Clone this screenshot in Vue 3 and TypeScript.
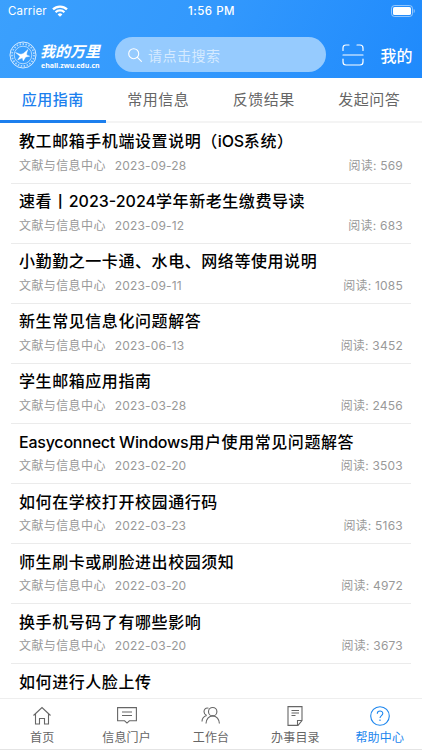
<script setup lang="ts">
interface Article { title: string; date?: string; reads?: number }
interface Segment { text: string; kind: 'cjk' | 'latin' | 'digits' }
const tabs: string[] = ['应用指南', '常用信息', '反馈结果', '发起问答']
const articles: Article[] = [
  { title: '教工邮箱手机端设置说明（iOS系统）', date: '2023-09-28', reads: 569 },
  { title: '速看丨2023-2024学年新老生缴费导读', date: '2023-09-12', reads: 683 },
  { title: '小勤勤之一卡通、水电、网络等使用说明', date: '2023-09-11', reads: 1085 },
  { title: '新生常见信息化问题解答', date: '2023-06-13', reads: 3452 },
  { title: '学生邮箱应用指南', date: '2023-03-28', reads: 2456 },
  { title: 'Easyconnect Windows用户使用常见问题解答', date: '2023-02-20', reads: 3503 },
  { title: '如何在学校打开校园通行码', date: '2022-03-23', reads: 5163 },
  { title: '师生刷卡或刷脸进出校园须知', date: '2022-03-20', reads: 4972 },
  { title: '换手机号码了有哪些影响', date: '2022-03-20', reads: 3673 },
  { title: '如何进行人脸上传' },
]
// Latin words and digits are tracked tighter than Chinese characters.
const segments = (title: string): Segment[] =>
  (title.match(/[A-Za-z ]+|[0-9-]+|[^A-Za-z0-9 -]+/g) ?? []).map((text) => ({
    text,
    kind: /^[A-Za-z ]/.test(text) ? 'latin' : /^[0-9-]/.test(text) ? 'digits' : 'cjk',
  }))
</script>

<template>
  <div class="screen">
    <header class="top">
      <div class="status">
        <div class="carrier">
          <span>Carrier</span>
          <svg width="16" height="12" viewBox="0 0 16 12" fill="none" stroke="#fff" stroke-width="2.3">
            <path d="M1 4.400a10 10 0 0 1 14 0M3.600 7.200a6.300 6.300 0 0 1 8.800 0" />
            <path d="M8 11.800 5.600 9.400a3.500 3.500 0 0 1 4.800 0z" fill="#fff" stroke="none" />
          </svg>
        </div>
        <span class="time">1:56 PM</span>
        <svg class="battery" width="24" height="12" viewBox="0 0 24 12">
          <rect x=".5" y=".5" width="21" height="11" rx="3" fill="none" stroke="#fff" stroke-opacity=".5" />
          <rect x="2" y="2" width="18" height="8" rx="1.600" fill="#fff" />
          <path d="M22.700 4v4c1.500-.7 1.500-3.300 0-4" fill="#fff" fill-opacity=".5" />
        </svg>
      </div>
      <div class="bar">
        <svg class="seal" width="28" height="28" viewBox="0 0 28 28" fill="none" stroke="#fff">
          <circle cx="14" cy="14" r="13" stroke-width=".8" />
          <circle cx="14" cy="14" r="11" stroke-width="1.800" stroke-dasharray="1.500 1.500" opacity=".6" />
          <circle cx="14" cy="14" r="8.800" stroke-width=".6" />
          <path d="M6.500 11.500c2.500.5 4 2.300 6.500 1.500 2-.4 3.500-2.500 6-4.500-.8 2-1.500 3.500-1.300 5.500l3 1.200-4 .8-2.500 4-.8-3.200-4.700 2.200 2.300-3.800z" fill="#fff" stroke-width=".4" />
        </svg>
        <div class="brand">
          <span class="brand-name">我的万里</span>
          <span class="brand-url">ehall.zwu.edu.cn</span>
        </div>
        <div class="search">
          <svg width="14" height="14" viewBox="0 0 14 14" fill="none" stroke="#fff" stroke-width="1.100" stroke-linecap="round">
            <circle cx="5.700" cy="5.700" r="5" /><path d="m9.400 9.400 4 4" />
          </svg>
          <span>请点击搜索</span>
        </div>
        <svg class="scan" width="22" height="22" viewBox="0 0 22 22" fill="none" stroke="#fff" stroke-width="1.200" stroke-linecap="round">
          <path d="M1 6.500V4q0-3 3-3h3M15 1h3q3 0 3 3v2.500M1 15v3q0 3 3 3h14q3 0 3-3v-3M1 11h20" />
        </svg>
        <span class="mine">我的</span>
      </div>
    </header>
    <nav class="tabs">
      <div v-for="(t, i) in tabs" :key="t" class="tab" :class="{ active: i === 0 }">{{ t }}</div>
    </nav>
    <main class="list">
      <article v-for="a in articles" :key="a.title" class="item">
        <h2 class="title"><span v-for="(s, i) in segments(a.title)" :key="i" :class="s.kind">{{ s.text }}</span></h2>
        <div v-if="a.date" class="meta">
          <span>文献与信息中心</span><span class="date">{{ a.date }}</span><span class="reads">阅读: {{ a.reads }}</span>
        </div>
      </article>
    </main>
    <footer class="dock">
      <div class="dock-item">
        <svg width="20" height="20" viewBox="0 0 20 20"><path d="M1.500 9.500 10 1.500l8.500 8M3.500 8v10h4v-5.500h5V18h4V8" /></svg>
        <span>首页</span>
      </div>
      <div class="dock-item">
        <svg width="20" height="20" viewBox="0 0 20 20"><path d="M.6 1.600h18.800v13.200h-7L10 17.100l-2.400-2.300h-7zM5 6h10M5 9.500h10" /></svg>
        <span>信息门户</span>
      </div>
      <div class="dock-item">
        <svg width="20" height="20" viewBox="0 0 20 20"><circle cx="11.700" cy="5.700" r="4.200" /><path d="M5 17.500c.2-4 2.700-7.600 6.700-7.600s6.500 3.600 6.700 7.600M7.500 2.200C4.500 1.500 3 3.500 3 5.700s1 3 2.700 3.800M1 15.500c0-3 1.300-5 4.700-6" /></svg>
        <span>工作台</span>
      </div>
      <div class="dock-item">
        <svg width="20" height="20" viewBox="0 0 20 20"><path d="M3 .6h14v13.900l-4 4.900H3zM12.500 19v-4.500H17M6.500 4.500h7.500M6.500 7h7.500M6.500 9.500h4" /></svg>
        <span>办事目录</span>
      </div>
      <div class="dock-item active">
        <svg width="20" height="20" viewBox="0 0 20 20"><circle cx="10" cy="10" r="9.300" /><path d="M7.300 7.800c0-3.700 5.500-3.500 5.500-.3 0 2-2.800 2.200-2.800 4.500M10 13.600v1.500" /></svg>
        <span>帮助中心</span>
      </div>
    </footer>
  </div>
</template>

<style>
body { margin: 0; overflow: hidden; }
</style>

<style scoped>
.screen { width: 422px; height: 750px; display: flex; flex-direction: column; overflow: hidden; background: #fff; font-family: Inter, "Noto Sans CJK SC", sans-serif; color: #000; }
.top { flex: none; height: 78px; background: linear-gradient(115deg, #3ba0fd 0%, #3298fd 50%, #1f8afc 100%); color: #fff; }
.status { height: 22px; display: grid; grid-template-columns: 1fr auto 1fr; align-items: center; padding: 0 7px 0 8px; font-size: 11.5px; }
.carrier { display: flex; align-items: center; gap: 5px; letter-spacing: .15px; }
.time { font-weight: 500; letter-spacing: .5px; }
.battery { justify-self: end; }
.bar { display: flex; align-items: center; height: 35px; margin-top: 15px; padding: 0 9px; }
.seal { flex: none; }
.brand { width: 62px; margin-left: 4px; display: flex; flex-direction: column; white-space: nowrap; }
.brand-name { font: italic 700 15px/22px "Noto Sans CJK SC", sans-serif; margin-left: -1px; }
.brand-url { font: 700 7px/8px "Open Sans", sans-serif; }
.search { box-sizing: border-box; width: 211px; height: 35px; margin-left: 12px; padding-left: 13px; border-radius: 18px; background: #96cbfe; display: flex; align-items: center; gap: 6px; font-size: 14px; color: #d5eaff; letter-spacing: .5px; }
.scan { margin-left: 16px; }
.mine { margin-left: 16.5px; font-size: 16px; font-weight: 500; white-space: nowrap; }
.tabs { flex: none; height: 45px; box-sizing: border-box; display: grid; grid-template-columns: repeat(4, 1fr); border-bottom: 2px solid #f4f4f4; font-size: 15px; letter-spacing: .45px; color: #666; }
.tab { text-align: center; line-height: 44px; height: 45px; box-sizing: border-box; }
.tab.active { color: #1c7fee; border-bottom: 3px solid #1c7fee; font-weight: 500; }
.list { flex: 1; min-height: 0; overflow: hidden; padding: .7px 11px 0; }
.item { height: 60.05px; box-sizing: border-box; padding: 5.6px 8px 0; border-bottom: 1px solid #ebebeb; }
.title { margin: 0; font-size: 16px; line-height: 24px; font-weight: 500; letter-spacing: .57px; white-space: nowrap; }
.latin { letter-spacing: -.22px; }
.digits { letter-spacing: 0; }
.meta { display: flex; font-size: 12px; line-height: 18px; margin-top: 3.5px; letter-spacing: .4px; color: #999; }
.date { margin-left: 9px; letter-spacing: .15px; }
.reads { margin-left: auto; letter-spacing: .22px; }
.dock { flex: none; height: 52px; box-sizing: border-box; display: grid; grid-template-columns: repeat(5, 1fr); border-top: 1px solid #eee; border-bottom: 1px solid #e4e4e4; background: #fff; color: #666; }
.dock-item { display: flex; flex-direction: column; align-items: center; padding-top: 7px; font-size: 12px; line-height: 20px; }
.dock-item span { margin-top: 1.5px; letter-spacing: .2px; }
.dock-item svg { fill: none; stroke: currentColor; stroke-width: 1.1; }
.dock-item.active { color: #1c86ee; }
</style>
